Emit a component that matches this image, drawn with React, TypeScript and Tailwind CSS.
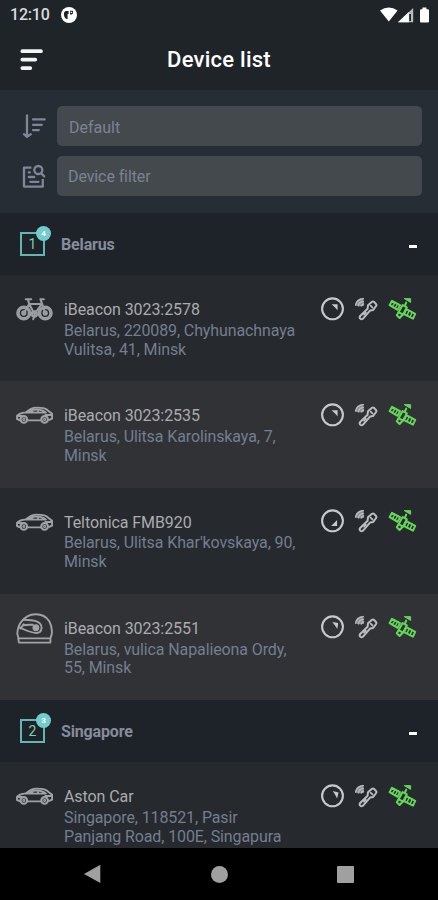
type Vehicle = "bike" | "car" | "helmet";

type Device = {
	name: string;
	address: string[];
	vehicle: Vehicle;
	// Direction of travel, clockwise degrees from the upper-right position.
	heading: number;
};

type Group = {
	title: string;
	index: number;
	count: number;
	devices: Device[];
};

const GROUPS: Group[] = [
	{
		title: "Belarus",
		index: 1,
		count: 4,
		devices: [
			{
				name: "iBeacon 3023:2578",
				address: ["Belarus, 220089, Chyhunachnaya", "Vulitsa, 41, Minsk"],
				vehicle: "bike",
				heading: 0,
			},
			{
				name: "iBeacon 3023:2535",
				address: ["Belarus, Ulitsa Karolinskaya, 7,", "Minsk"],
				vehicle: "car",
				heading: 0,
			},
			{
				name: "Teltonica FMB920",
				address: ["Belarus, Ulitsa Khar'kovskaya, 90,", "Minsk"],
				vehicle: "car",
				heading: 90,
			},
			{
				name: "iBeacon 3023:2551",
				address: ["Belarus, vulica Napalieona Ordy,", "55, Minsk"],
				vehicle: "helmet",
				heading: 8,
			},
		],
	},
	{
		title: "Singapore",
		index: 2,
		count: 3,
		devices: [
			{
				name: "Aston Car",
				address: ["Singapore, 118521, Pasir", "Panjang Road, 100E, Singapura"],
				vehicle: "car",
				heading: 14,
			},
		],
	},
];

function StatusBar() {
	return (
		<div className="flex h-[29px] items-center pl-[10px] pr-[8px]">
			<span className="w-[51px] text-[16px] font-medium leading-[29px] tracking-[-0.2px] text-[#d9dbdd]">
				12:10
			</span>
			<svg className="h-4 w-4" viewBox="0 0 16 16">
				<circle cx="8" cy="8" r="8" fill="#fff" />
				<path d="M4.6 4h3v3h-1v5.2A4.6 4.6 0 0 1 3 8V5.6z" fill="#1f2429" />
				<path d="M9 3.8h3v2.6L10.6 7.6H9z" fill="#1f2429" />
				<path d="M9.6 4.8h1.6v1.2H9.6z" fill="#fff" />
			</svg>
			<svg className="ml-auto h-4 w-[50px]" viewBox="0 0 50 16" fill="#fff">
				<path d="M0 3.6Q8.8-2.8 17.6 3.6L8.8 14.4Z" />
				<path d="M18 15.2 33.2 1v14.2z" fill="#b9bcbe" />
				<path d="M18 15.2 28.8 5v10.2z" />
				<path d="M29.2 7h1.8v7h-1.8z" fill="#1f2429" />
				<path d="M42.4.6h4v1.6h1.4q1.2 0 1.2 1.2v10.8q0 1.2-1.2 1.2h-6.6q-1.2 0-1.2-1.2V3.4q0-1.2 1.2-1.2h1.2z" />
			</svg>
		</div>
	);
}

function Header() {
	return (
		<header className="flex h-[61px] items-center px-5">
			<svg
				className="h-6 w-6"
				viewBox="0 0 24 24"
				stroke="#f4f5f5"
				strokeWidth="3.7"
				strokeLinecap="round"
			>
				<path d="M2.3 3.2h18.7M2.3 11.6h13M2.3 20.1h8" />
			</svg>
			<h1 className="flex-1 pr-6 text-center text-[22px] font-medium leading-[26px] tracking-[0.25px] text-white">
				Device list
			</h1>
		</header>
	);
}

function SortIcon() {
	return (
		<svg
			className="h-6 w-6"
			viewBox="0 0 24 24"
			fill="none"
			stroke="#7e8797"
			strokeWidth="2.3"
			strokeLinecap="round"
			strokeLinejoin="round"
		>
			<path d="M5 1.5v20M2 20.2 5 22.8l3.7-2.6" />
			<path d="M11 5.4h11.6M11 10.8h8.8M11 16.1h5.8" />
		</svg>
	);
}

function FilterIcon() {
	return (
		<svg
			className="h-6 w-6"
			viewBox="0 0 24 24"
			fill="none"
			stroke="#7e8797"
			strokeWidth="2.3"
			strokeLinecap="round"
		>
			<path
				d="M9.4 3.6H2v19h18.8v-7.6"
				strokeLinecap="butt"
				strokeLinejoin="round"
			/>
			<circle cx="16.3" cy="6" r="4" />
			<path d="m19.2 9.2 3 3.2" />
			<path d="M6.8 8.4h1M6.8 13h5.4M8.4 17.8h8" />
		</svg>
	);
}

function FilterPanel() {
	return (
		<section className="flex h-[123px] flex-col gap-[10px] bg-[#272d34] pl-[22px] pr-4 pt-4">
			<div className="flex h-10 items-center gap-[11px]">
				<SortIcon />
				<div className="h-10 flex-1 rounded-[5px] bg-[#44494e] px-3 text-[16px] leading-[43px] text-[#7b8392]">
					Default
				</div>
			</div>
			<div className="flex h-10 items-center gap-[11px]">
				<FilterIcon />
				<div className="h-10 flex-1 rounded-[5px] bg-[#44494e] px-[11px] text-[16px] leading-[42px] tracking-[-0.1px] text-[#7b8392]">
					Device filter
				</div>
			</div>
		</section>
	);
}

function GroupHeader({ group }: { group: Group }) {
	return (
		<div className="flex h-[62px] items-center bg-[#1e2329] pl-5 pr-[21px]">
			<div className="relative flex h-6 w-[25px] items-center justify-center border-2 border-[#64b5b4] text-[14px] leading-none text-[#7ccfae]">
				{group.index}
				<span className="absolute -right-[8px] -top-[8px] flex h-[15px] w-[15px] items-center justify-center rounded-full bg-[#72cccd] text-[8px] font-bold leading-none text-white">
					{group.count}
				</span>
			</div>
			<span className="ml-4 pt-[2px] text-[16px] font-bold tracking-[-0.15px] text-[#858c9b]">
				{group.title}
			</span>
			<span className="ml-auto mt-[4px] h-[3px] w-2 bg-white" />
		</div>
	);
}

function BikeIcon() {
	return (
		<svg
			className="h-6 w-[37px]"
			viewBox="0 0 37 24"
			fill="none"
			stroke="#9b9ea0"
			strokeWidth="2.1"
			strokeLinecap="round"
			strokeLinejoin="round"
		>
			<circle cx="7.8" cy="16" r="5.8" strokeWidth="3.6" />
			<circle cx="29.2" cy="16" r="5.8" strokeWidth="3.6" />
			<circle cx="7.8" cy="16" r="1.6" />
			<circle cx="29.2" cy="16" r="1.6" />
			<path d="M8 16 13.2 7h12.6M13.2 7l5.2 10 7.4-10M29.2 16 24.4 2.2h3.4M13.2 7 12 2.6M9.8 2.2h5.4" />
			<circle cx="18.4" cy="17" r="2.4" strokeWidth="2.6" />
			<path d="m18.4 19.4-1.2 2.8" />
		</svg>
	);
}

function CarIcon() {
	return (
		<svg
			className="h-[18px] w-[37px]"
			viewBox="0 0 37 18"
			fill="none"
			stroke="#a0a3a5"
			strokeWidth="1.9"
			strokeLinejoin="round"
			strokeLinecap="round"
		>
			<path d="M3.5 14 1 13V9.8Q3 7.2 9.8 6.4 14.8 1.7 20.5 1.6c7 0 9.5.6 13 4.2l2.6 2v4.8l-2.8 1.3M11.8 14.4h13" />
			<path d="M10 6.6h20Q26.6 3.6 20.4 3.5 15 3.4 12.4 6M17 3.8 16 6.4M21.4 3.6l.8 2.8" />
			<path d="M1.8 10h4M29.4 9h6" />
			<circle cx="7.8" cy="13.4" r="3.3" strokeWidth="2.1" />
			<circle cx="28.6" cy="13.4" r="3.3" strokeWidth="2.1" />
			<circle cx="7.8" cy="13.4" r=".6" />
			<circle cx="28.6" cy="13.4" r=".6" />
		</svg>
	);
}

function HelmetIcon() {
	return (
		<svg
			className="h-[31px] w-[37px]"
			viewBox="0 0 37 31"
			fill="none"
			stroke="#a0a3a5"
			strokeWidth="1.9"
			strokeLinejoin="round"
			strokeLinecap="round"
		>
			<path d="M2.6 25 1.3 21Q1.6 14 4.8 9.4 10.5 1.4 19.5 1.2 28.6 1 33.3 8.2q3.4 6.3 2.4 13.2L34.4 25.4v4.2H3L2.2 25.4H34" />
			<path d="M7.4 6.8q8.6 0 13.2 1.6 5 1.8 5 6.6-.4 5-5.4 5-6-.4-15.4-5L3 14.2" />
			<path d="M6.8 12.4q5-1 10-.6M4.4 15.6l3.4-4.4" />
			<circle cx="19.9" cy="14.8" r="2.5" fill="#a0a3a5" />
		</svg>
	);
}

function VehicleIcon({ vehicle }: { vehicle: Vehicle }) {
	switch (vehicle) {
		case "bike":
			return <BikeIcon />;
		case "helmet":
			return <HelmetIcon />;
		default:
			return <CarIcon />;
	}
}

function HeadingIcon({ heading }: { heading: number }) {
	return (
		<svg className="h-6 w-6" viewBox="0 0 24 24">
			<circle
				cx="12.5"
				cy="11.8"
				r="10.4"
				fill="none"
				stroke="#c6c8ca"
				strokeWidth="2.1"
			/>
			<path
				d="M11.6 7.2H17.6V13.2L14.8 10.2Z"
				fill="#c6c8ca"
				transform={`rotate(${heading} 12.5 11.8)`}
			/>
		</svg>
	);
}

function BeaconIcon() {
	return (
		<svg
			className="h-6 w-6"
			viewBox="0 0 24 24"
			fill="none"
			stroke="#bbbdbf"
			strokeWidth="2"
			strokeLinecap="round"
			strokeLinejoin="round"
		>
			<path
				d="M.8 8.6Q1.4 1.6 9.4.8L10 8.8 7 9.6z"
				fill="#8b8e90"
				stroke="none"
			/>
			<path
				d="M1.6 8.2Q2.4 2.4 9.4 1.6M4.4 8.8q.6-3.8 5-4.4M7.4 8.8q.4-1.4 2.2-1.8"
				strokeWidth="1.3"
			/>
			<path d="m14 8.2 4-3.4q1-.7 2 .1l2 2.1q.8 1 .1 2l-2.9 4-3.2.6-7.2 8.2q-1.4 1-2.6-.2-1.1-1.3 0-2.6l7.4-7.2z" />
			<path d="m16.6 8.6 2 2M10 17.6l1.8-2" strokeWidth="1.7" />
		</svg>
	);
}

function SatelliteIcon() {
	return (
		<svg
			className="h-6 w-[29px]"
			viewBox="0 0 29 24"
			fill="none"
			stroke="#66d65b"
			strokeWidth="2"
			strokeLinejoin="round"
			strokeLinecap="round"
		>
			<path d="m4 3.8 8 4.4-2.4 4.6L1.6 8.2zM18.4 12.2l8.8 4.6-2.2 4.9-9-4.6z" />
			<path
				d="M6.9 5.4 4.5 9.6M9.6 6.8 7.2 11M21.2 13.8l-2.2 4.6M24.2 15.4 22 20"
				strokeWidth="1.5"
			/>
			<path d="m14.6 8 4.2 2.4-3.8 7.2-4.4-2.4z" />
			<path d="m10.6 15.4-1.8 2.8 2.8 2.8 2.8-3M16.8 9l1.4-3.4" />
			<path d="M16.6 1.8 22.6 5.4 22.6 2z" fill="#66d65b" strokeWidth="1" />
		</svg>
	);
}

function DeviceRow({ device, striped }: { device: Device; striped: boolean }) {
	return (
		<div
			className={`flex h-[106.25px] shrink-0 pl-4 ${striped ? "bg-[#303236]" : "bg-[#26292d]"}`}
		>
			<div
				className={`w-12 shrink-0 ${device.vehicle === "car" ? "pt-[25px]" : device.vehicle === "bike" ? "pt-[22px]" : "pt-[19px]"}`}
			>
				<VehicleIcon vehicle={device.vehicle} />
			</div>
			<div className="w-[256px] shrink-0 whitespace-nowrap pt-6 text-[16px]">
				<div className="h-[22.75px] leading-[21px] tracking-[-0.08px] text-[#aaacae]">
					{device.name}
				</div>
				{device.address.map((line) => (
					<div
						key={line}
						className="leading-[18.75px] tracking-[-0.11px] text-[#747e90]"
					>
						{line}
					</div>
				))}
			</div>
			<div className="flex h-6 pt-[21.5px]">
				<div className="w-[34px]">
					<HeadingIcon heading={device.heading} />
				</div>
				<div className="w-[34px]">
					<BeaconIcon />
				</div>
				<SatelliteIcon />
			</div>
		</div>
	);
}

function NavigationBar() {
	return (
		<nav className="flex h-[52px] items-center bg-black pl-[84px]">
			<svg className="h-5 w-[17px]" viewBox="0 0 17 20" fill="#a0a0a0">
				<path d="M0 9.9 16.3.8V19z" />
			</svg>
			<span className="ml-[110px] h-[17px] w-[17px] rounded-full bg-[#a0a0a0]" />
			<span className="ml-[109px] h-[17px] w-[17px] rounded-[1px] bg-[#a0a0a0]" />
		</nav>
	);
}

export default function App() {
	return (
		<div className="flex h-[900px] w-[438px] flex-col overflow-hidden bg-[#1f2429] font-['Roboto',sans-serif]">
			<StatusBar />
			<Header />
			<FilterPanel />
			<main className="h-[635px] overflow-hidden">
				{GROUPS.map((group) => (
					<section key={group.title}>
						<GroupHeader group={group} />
						{group.devices.map((device, i) => (
							<DeviceRow
								key={device.name}
								device={device}
								striped={i % 2 === 1}
							/>
						))}
					</section>
				))}
			</main>
			<NavigationBar />
		</div>
	);
}
